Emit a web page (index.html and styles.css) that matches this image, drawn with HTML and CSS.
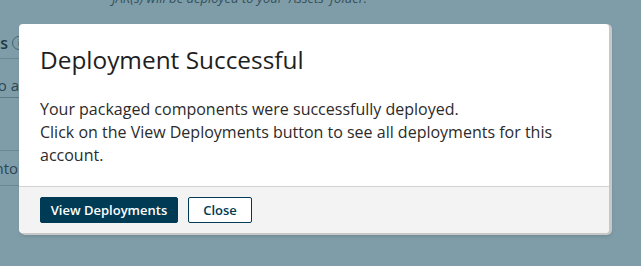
FILE: index.html
```html
<!DOCTYPE html>
<html>
<head>
<meta charset="utf-8">
<link rel="stylesheet" href="styles.css">
</head>
<body>
<div class="page">
  <div class="note">JAR(s) will be deployed to your 'Assets' folder.</div>
  <div class="side">
    <div class="side-head"><span class="side-title">Packages</span><span class="info-circle">i</span></div>
    <div class="side-input">Deploy to a</div>
    <div class="side-row">Deploy into</div>
  </div>
</div>
<div class="modal">
  <div class="modal-body">
    <h2 class="modal-title">Deployment Successful</h2>
    <p class="modal-text">Your packaged components were successfully deployed.<br>Click on the View Deployments button to see all deployments for this account.</p>
  </div>
  <div class="modal-footer">
    <button class="btn btn-primary">View Deployments</button>
    <button class="btn btn-outline">Close</button>
  </div>
</div>
</body>
</html>
```
FILE: styles.css
```css
*, *::before, *::after {
  box-sizing: border-box;
}
html, body {
  margin: 0;
  padding: 0;
}
body {
  width: 641px;
  height: 266px;
  overflow: hidden;
  background: #7f9da8;
  font-family: "Open Sans", "Noto Sans", sans-serif;
  position: relative;
}
.page {
  display: flex;
  flex-direction: column;
}
.note {
  margin-top: -10px;
  height: 16px;
  padding-left: 112px;
  font-size: 13px;
  line-height: 16px;
  font-style: italic;
  white-space: nowrap;
  color: #34505b;
}
.side {
  margin-left: -100px;
  width: 126px;
  display: flex;
  flex-direction: column;
}
.side-head {
  display: flex;
  align-items: center;
  justify-content: flex-end;
  gap: 4px;
  height: 31px;
  margin-top: 22px;
  border-bottom: 1px solid #6a8893;
  font-size: 16px;
  font-weight: 600;
  white-space: nowrap;
  color: #1f3a45;
}
.info-circle {
  width: 14px;
  height: 14px;
  border: 1px solid #3d6470;
  border-radius: 50%;
  font-size: 9px;
  line-height: 12px;
  text-align: center;
  color: #3d6470;
}
.side-input {
  margin-top: 14px;
  height: 25px;
  border-bottom: 1px solid #5a7a85;
  font-size: 15px;
  line-height: 24px;
  white-space: nowrap;
  text-align: right;
  padding-right: 7px;
  color: #2c4752;
}
.side-row {
  margin-top: 52px;
  height: 36px;
  border-top: 1px solid #6a8893;
  border-bottom: 1px solid #6a8893;
  font-size: 15px;
  line-height: 34px;
  white-space: nowrap;
  text-align: right;
  padding-right: 8px;
  color: #2c4752;
}
.modal {
  position: absolute;
  left: 19px;
  top: 24px;
  width: 590px;
  height: 209px;
  background: #fff;
  border-radius: 4px;
  box-shadow: 2px 1px 0 1px #c8c8c8, 2px 3px 4px rgba(0, 0, 0, 0.15);
  display: flex;
  flex-direction: column;
  overflow: hidden;
}
.modal-body {
  flex: 1;
  padding: 21px 21px 0 21px;
}
.modal-title {
  margin: 0;
  font-size: 24.4px;
  line-height: 30px;
  font-weight: 400;
  color: #1e1e1e;
}
.modal-text {
  margin: 23px 0 0 0;
  font-size: 16px;
  line-height: 23px;
  color: #2b2b2b;
}
.modal-footer {
  height: 47px;
  border-top: 1px solid #d2d2d2;
  background: #f3f3f3;
  display: flex;
  align-items: center;
  gap: 10px;
  padding: 0 21px;
}
.btn {
  height: 26px;
  border-radius: 2px;
  font-family: "Open Sans", "Noto Sans", sans-serif;
  font-size: 13px;
  font-weight: 600;
  padding: 0;
  cursor: pointer;
}
.btn-primary {
  width: 138px;
  background: #003b56;
  border: 1px solid #003b56;
  color: #fff;
}
.btn-outline {
  width: 64px;
  background: #fff;
  border: 1px solid #003b56;
  color: #003b56;
}
```
